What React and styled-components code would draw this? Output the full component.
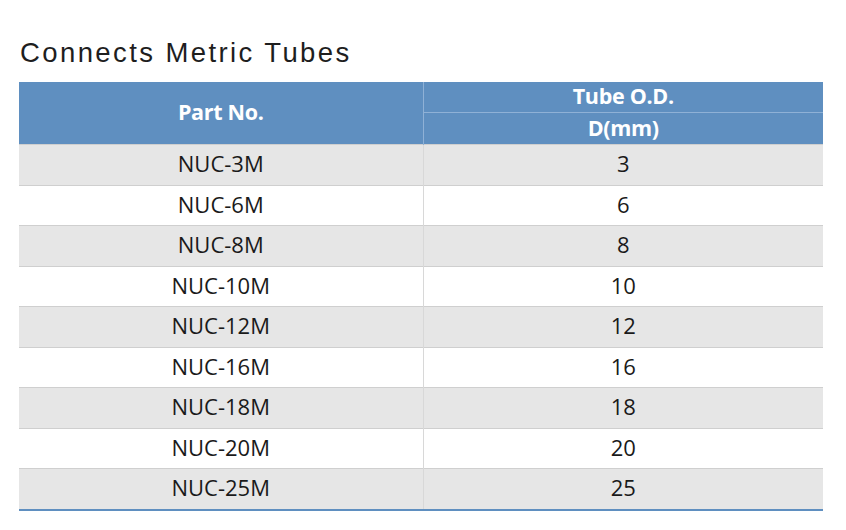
import styled, { createGlobalStyle } from "styled-components";

const GlobalStyle = createGlobalStyle`
  body {
    margin: 0;
    background: #ffffff;
    font-family: "Open Sans", "Noto Sans", sans-serif;
  }
`;

const Page = styled.div`
  padding: 35px 23px 0 19px;
  width: 846px;
  box-sizing: border-box;
`;

const Title = styled.h2`
  margin: 0 0 11px 1px;
  font-family: "Liberation Sans", Arial, sans-serif;
  font-weight: 400;
  font-size: 27.5px;
  letter-spacing: 2.4px;
  line-height: 36px;
  color: #1e1e1e;
`;

const Table = styled.table`
  width: 804px;
  border-collapse: collapse;
  table-layout: fixed;
  border-bottom: 2px solid #5f8fc0;
`;

const HeadCell = styled.th`
  background: #5f8fc0;
  color: #ffffff;
  font-weight: 700;
  font-size: 21.5px;
  letter-spacing: -0.3px;
  height: ${({ $tall }) => ($tall ? "60px" : "28px")};
  padding: 0 0 2px;
  text-align: center;
  border-left: ${({ $divider }) => ($divider ? "1px solid #8fb1d6" : "none")};
  border-bottom: ${({ $sub }) => ($sub ? "1px solid #8fb1d6" : "none")};
  line-height: 1;
`;

const Row = styled.tr`
  background: ${({ $shade }) => ($shade ? "#e6e6e6" : "#ffffff")};
  border-top: 1px solid #cfcfcf;
`;

const Cell = styled.td`
  height: 36.5px;
  padding: 0 0 3px;
  text-align: center;
  font-size: 22px;
  line-height: 1;
  color: #1a1a1a;
  border-left: ${({ $divider }) => ($divider ? "1px solid #d8d8d8" : "none")};
`;

const rows = [
  ["NUC-3M", 3],
  ["NUC-6M", 6],
  ["NUC-8M", 8],
  ["NUC-10M", 10],
  ["NUC-12M", 12],
  ["NUC-16M", 16],
  ["NUC-18M", 18],
  ["NUC-20M", 20],
  ["NUC-25M", 25],
];

export default function App() {
  return (
    <>
      <GlobalStyle />
      <Page>
        <Title>Connects Metric Tubes</Title>
        <Table>
          <colgroup>
            <col style={{ width: "404px" }} />
            <col />
          </colgroup>
          <thead>
            <tr>
              <HeadCell rowSpan={2} $tall>
                Part No.
              </HeadCell>
              <HeadCell $divider $sub>
                Tube O.D.
              </HeadCell>
            </tr>
            <tr>
              <HeadCell $divider>D(mm)</HeadCell>
            </tr>
          </thead>
          <tbody>
            {rows.map(([part, od], i) => (
              <Row key={part} $shade={i % 2 === 0}>
                <Cell>{part}</Cell>
                <Cell $divider>{od}</Cell>
              </Row>
            ))}
          </tbody>
        </Table>
      </Page>
    </>
  );
}
